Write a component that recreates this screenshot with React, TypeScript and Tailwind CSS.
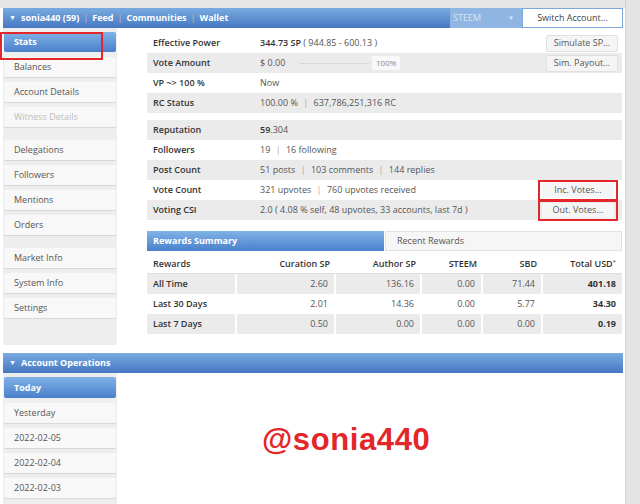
import clsx from "clsx";

type NavProps = { label: string; active?: boolean; disabled?: boolean };

function NavItem({ label, active, disabled }: NavProps) {
  return (
    <div
      className={clsx(
        "h-[20px] flex items-center pl-[10px] rounded-[2px]",
        active
          ? "bg-linear-to-b from-[#80b2e6] to-[#4a80cb] text-white font-bold"
          : "bg-[#f8f8f8] shadow-[0_1px_1px_rgba(0,0,0,0.10)]",
        disabled ? "text-[#bdbdbd]" : !active && "text-[#555]",
      )}
    >
      {label}
    </div>
  );
}

function SmallButton({ label }: { label: string }) {
  return (
    <div className="h-[17px] w-[72px] flex items-center justify-center bg-[#f5f5f5] border border-[#e0e0e0] rounded-[2px] text-[#555]">
      {label}
    </div>
  );
}

type StatRow = { label: string; value: React.ReactNode; action?: React.ReactNode };

function StatRows({ rows, startGray }: { rows: StatRow[]; startGray: boolean }) {
  return (
    <div className="flex flex-col">
      {rows.map((r, i) => {
        const gray = startGray ? i % 2 === 0 : i % 2 === 1;
        return (
          <div
            key={r.label}
            className={clsx("h-[20px] flex items-center", gray && "bg-[#ebebeb]")}
          >
            <div className="w-[103px] pl-[6px] font-semibold text-[#333]">{r.label}</div>
            <div className="flex-1 pl-[10px] text-[#555]">{r.value}</div>
            {r.action && <div className="pr-[4px]">{r.action}</div>}
          </div>
        );
      })}
    </div>
  );
}

function Sep() {
  return <span className="text-[#aaa] mx-[4px]">|</span>;
}

function Bar() {
  return <span className="text-[#aaa] mx-[3px]">|</span>;
}

const rewardCols = ["Rewards", "Curation SP", "Author SP", "STEEM", "SBD", "Total USD"];
const colW = ["w-[90px]", "w-[99px]", "w-[86px]", "w-[61px]", "w-[60px]", "flex-1"];
const rewardRows = [
  ["All Time", "2.60", "136.16", "0.00", "71.44", "401.18"],
  ["Last 30 Days", "2.01", "14.36", "0.00", "5.77", "34.30"],
  ["Last 7 Days", "0.50", "0.00", "0.00", "0.00", "0.19"],
];

function RedBox({ children }: { children: React.ReactNode }) {
  return (
    <div className="border-2 border-[#e3262a] px-[2px] w-[80px] h-[21px] flex items-center justify-center">
      {children}
    </div>
  );
}

export default function App() {
  return (
    <div className="w-[640px] h-[504px] overflow-hidden bg-white flex font-['Open_Sans',sans-serif] text-[9px] text-[#555]">
      <div className="w-[625px] flex flex-col">
        <div className="h-[8px] bg-[#e6e6e6] shrink-0" />

        {/* top header */}
        <div className="pl-[3px] pr-[2px]">
          <div className="h-[20px] flex items-center bg-linear-to-b from-[#79abe0] to-[#4677c2] text-white font-bold">
            <span className="ml-[6px] mr-[5px] text-[7px]">▼</span>
            <span>sonia440 (59)</span>
            <Sep />
            <span>Feed</span>
            <Sep />
            <span>Communities</span>
            <Sep />
            <span>Wallet</span>
            <div className="ml-auto h-full w-[72px] bg-[#8fb6e2] flex items-center pl-[3px] pr-[8px] font-normal text-[#d6e6f6]">
              <span>STEEM</span>
              <span className="ml-auto text-[6px]">▼</span>
            </div>
            <div className="h-full w-[101px] bg-white border border-[#7ea8dc] flex items-center justify-center font-normal text-[#444]">
              Switch Account...
            </div>
          </div>
        </div>

        {/* stats section */}
        <div className="flex">
          <div className="relative w-[117px] pl-[3px] bg-white">
            <div className="w-[114px] h-[317px] bg-[#eeeeee] flex flex-col px-[1px] pt-[4px]">
              <div className="flex flex-col gap-[5px]">
                <NavItem label="Stats" active />
                <NavItem label="Balances" />
                <NavItem label="Account Details" />
                <NavItem label="Witness Details" disabled />
              </div>
              <div className="flex flex-col gap-[5px] mt-[13px]">
                <NavItem label="Delegations" />
                <NavItem label="Followers" />
                <NavItem label="Mentions" />
                <NavItem label="Orders" />
              </div>
              <div className="flex flex-col gap-[5px] mt-[13px]">
                <NavItem label="Market Info" />
                <NavItem label="System Info" />
                <NavItem label="Settings" />
              </div>
            </div>
            <div className="absolute left-0 top-[4px] w-[103px] h-[28px] border-2 border-[#e3262a]" />
          </div>

          <div className="flex-1 pl-[30px] pr-[3px] pt-[5px]">
            <StatRows
              startGray={false}
              rows={[
                {
                  label: "Effective Power",
                  value: (
                    <span>
                      <b className="text-[#333] font-semibold">344.73 SP</b> ( 944.85 - 600.13 )
                    </span>
                  ),
                  action: <SmallButton label="Simulate SP..." />,
                },
                {
                  label: "Vote Amount",
                  value: (
                    <div className="flex items-center">
                      <span className="w-[40px]">$ 0.00</span>
                      <div className="w-[70px] border-t border-dotted border-[#c8c8c8]" />
                      <span className="ml-[2px] px-[4px] bg-[#f8f8f8] text-[#888] text-[8px] leading-[14px]">100%</span>
                    </div>
                  ),
                  action: <SmallButton label="Sim. Payout..." />,
                },
                { label: "VP ~> 100 %", value: "Now" },
                {
                  label: "RC Status",
                  value: (
                    <span>
                      100.00 % <Bar /> 637,786,251,316 RC
                    </span>
                  ),
                },
              ]}
            />
            <div className="mt-[7px]">
              <StatRows
                startGray
                rows={[
                  {
                    label: "Reputation",
                    value: (
                      <span>
                        <b className="text-[#333] font-semibold">59</b>.304
                      </span>
                    ),
                  },
                  {
                    label: "Followers",
                    value: (
                      <span>
                        19 <Bar /> 16 following
                      </span>
                    ),
                  },
                  {
                    label: "Post Count",
                    value: (
                      <span>
                        51 posts <Bar /> 103 comments <Bar /> 144 replies
                      </span>
                    ),
                  },
                  {
                    label: "Vote Count",
                    value: (
                      <span>
                        321 upvotes <Bar /> 760 upvotes received
                      </span>
                    ),
                    action: (
                      <RedBox>
                        <div className="w-full h-[15px] flex items-center justify-center bg-[#f5f5f5] text-[#555]">
                          Inc. Votes...
                        </div>
                      </RedBox>
                    ),
                  },
                  {
                    label: "Voting CSI",
                    value: "2.0 ( 4.08 % self, 48 upvotes, 33 accounts, last 7d )",
                    action: (
                      <RedBox>
                        <div className="w-full h-[15px] flex items-center justify-center bg-[#f5f5f5] text-[#555]">
                          Out. Votes...
                        </div>
                      </RedBox>
                    ),
                  },
                ]}
              />
            </div>

            {/* rewards */}
            <div className="mt-[11px] flex h-[20px]">
              <div className="w-[237px] flex items-center pl-[6px] bg-linear-to-b from-[#80b2e6] to-[#4a80cb] text-white font-bold">
                Rewards Summary
              </div>
              <div className="flex-1 ml-[1px] flex items-center pl-[11px] bg-[#f6f6f6] border border-[#e2e2e2] text-[#555]">
                Recent Rewards
              </div>
            </div>
            <div className="mt-[3px] flex h-[20px] border-b border-[#dedede]">
              {rewardCols.map((c, i) => (
                <div
                  key={c}
                  className={clsx(
                    colW[i],
                    "flex items-center font-semibold text-[#333]",
                    i === 0 ? "pl-[6px]" : "justify-end pr-[6px]",
                  )}
                >
                  {c}
                  {i === 5 && <span className="text-[6px] self-start mt-[4px] font-normal">*</span>}
                </div>
              ))}
            </div>
            <div className="flex flex-col">
              {rewardRows.map((row, ri) => (
                <div key={row[0]} className="flex h-[20px]">
                  {row.map((v, i) => (
                    <div
                      key={i}
                      className={clsx(
                        colW[i],
                        "flex items-center",
                        ri !== 1 && "bg-[#ebebeb]",
                        i < 5 && "border-r-2 border-white",
                        i === 0 ? "pl-[6px] font-semibold text-[#333]" : "justify-end pr-[6px]",
                        i === 5 && "font-bold text-[#333]",
                      )}
                    >
                      {v}
                    </div>
                  ))}
                </div>
              ))}
            </div>
          </div>
        </div>

        {/* operations section */}
        <div className="pl-[3px] pr-[2px] mt-[8px]">
          <div className="h-[20px] flex items-center bg-linear-to-b from-[#79abe0] to-[#4677c2] text-white font-bold">
            <span className="ml-[6px] mr-[5px] text-[7px]">▼</span>
            <span>Account Operations</span>
          </div>
        </div>
        <div className="flex flex-1">
          <div className="w-[117px] pl-[3px]">
            <div className="w-[114px] h-full bg-[#eeeeee] flex flex-col gap-[5px] px-[1px] pt-[4px]">
              <div className="h-[21px] flex items-center pl-[10px] rounded-[2px] bg-linear-to-b from-[#80b2e6] to-[#4a80cb] text-white font-bold">
                Today
              </div>
              <NavItem label="Yesterday" />
              <NavItem label="2022-02-05" />
              <NavItem label="2022-02-04" />
              <NavItem label="2022-02-03" />
            </div>
          </div>
          <div className="flex-1 pl-[145px] pt-[44px]">
            <span className="font-['Liberation_Sans',Arial,sans-serif] font-bold text-[31px] tracking-[0.6px] text-[#e3262a]">
              @sonia440
            </span>
          </div>
        </div>
      </div>
      <div className="w-[15px] bg-[#e4e4e4] border-l border-[#d3d3d3]" />
    </div>
  );
}
